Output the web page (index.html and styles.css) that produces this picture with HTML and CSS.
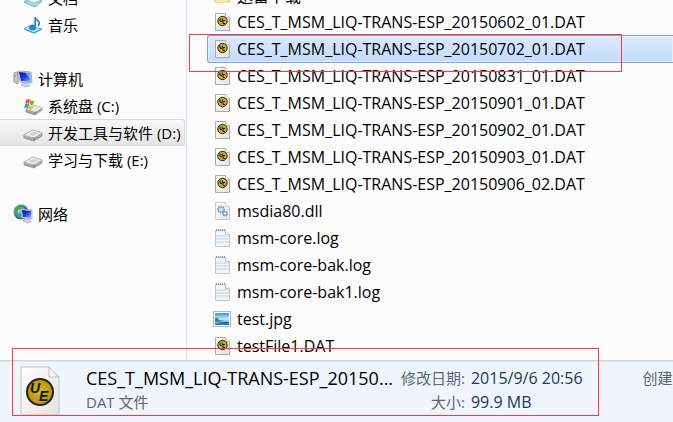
FILE: index.html
```
<!DOCTYPE html>
<html lang="zh-CN">
<head>
  <meta charset="UTF-8">
  <title>资源管理器</title>
  <link rel="stylesheet" href="styles.css">
</head>
<body>

  <!-- Shared icons -->
  <svg class="sprite" aria-hidden="true">
    <defs>
      <linearGradient id="paper" x1="0" y1="0" x2="1" y2="1">
        <stop offset="0" stop-color="#fff"/>
        <stop offset="1" stop-color="#e3e3e3"/>
      </linearGradient>
      <linearGradient id="screen" x1="0" y1="0" x2="1" y2="1">
        <stop offset="0" stop-color="#0713a8"/>
        <stop offset="0.5" stop-color="#1c3de0"/>
        <stop offset="1" stop-color="#8fc4ff"/>
      </linearGradient>
      <linearGradient id="sky" x1="0" y1="0" x2="0" y2="1">
        <stop offset="0" stop-color="#3c93e0"/>
        <stop offset="0.5" stop-color="#c5ecfb"/>
        <stop offset="1" stop-color="#2a84b8"/>
      </linearGradient>
      <radialGradient id="gold">
        <stop offset="0" stop-color="#d9b92c"/>
        <stop offset="1" stop-color="#b8920f"/>
      </radialGradient>
      <radialGradient id="earth" cx="0.35" cy="0.35">
        <stop offset="0" stop-color="#b6ecff"/>
        <stop offset="1" stop-color="#1768b8"/>
      </radialGradient>
    </defs>
    <symbol id="icon-dat" viewBox="0 0 40 50">
      <path d="M1 1h28l10 10v38H1z" fill="url(#paper)" stroke="#c4c4c4"/>
      <path d="M29 1v10h10z" fill="#f8f8f8" stroke="#b9b9b9"/>
      <circle cx="20" cy="26" r="13" fill="url(#gold)" stroke="#27231b" stroke-width="2"/>
      <text x="10" y="27" class="badge-letter">U</text>
      <text x="19" y="35" class="badge-letter">E</text>
    </symbol>
    <symbol id="icon-dat-small" viewBox="0 0 20 20">
      <path d="M3.5 1.5h10l4 4v13h-14z" fill="url(#paper)" stroke="#aaa"/>
      <path d="M13.5 1.5v4h4" fill="#fff" stroke="#bbb"/>
      <circle cx="10.5" cy="9" r="4.7" fill="#d2ac1c" stroke="#2c281d" stroke-width="1"/>
      <path d="M8 6.500v2.500q1 1.500 2.300 0V6.500M13 8.500h-2v3h2" fill="none" stroke="#17150f" stroke-width="1"/>
    </symbol>
    <symbol id="icon-dll" viewBox="0 0 20 20">
      <path d="M3.5 1.5h10l4 4v13h-14z" fill="url(#paper)" stroke="#ccc"/>
      <path d="M13.5 1.5v4h4" fill="#fff" stroke="#ccc"/>
      <circle cx="9" cy="8.5" r="3" fill="#e4f1fa" stroke="#86acc9" stroke-width="2" stroke-dasharray="1.5 0.7"/>
      <circle cx="9" cy="8.5" r="2.5" fill="#d6e9f6" stroke="#7ba5c4"/>
      <circle cx="13" cy="12.5" r="2" fill="#e4f1fa" stroke="#7ba5c4" stroke-width="1.5"/>
    </symbol>
    <symbol id="icon-log" viewBox="0 0 20 20">
      <path d="M3.5 2.5h10l4 4v12h-14z" fill="#f1f4f6" stroke="#c6c9cc"/>
      <path d="M4 8h13M4 11h13M4 14h13" stroke="#cfdfe9" stroke-width="1.5"/>
      <path d="M13.5 2.5v4h4" fill="#fff" stroke="#c2c2c2"/>
      <path d="M4 2h9" stroke="#999" stroke-width="2" stroke-dasharray="1 1"/>
    </symbol>
    <symbol id="icon-jpg" viewBox="0 0 20 20">
      <path d="M1.5 2.500h17v15h-17z" fill="#fff" stroke="#b8b8b8"/>
      <path d="M3 4h14v12H3z" fill="url(#sky)"/>
      <path d="M3 9q3-1 4 2l5 1-9 1z" fill="#38836b"/>
      <path d="M3 16q5-4 14-3v3z" fill="#2277b3"/>
    </symbol>
    <symbol id="icon-folder" viewBox="0 0 20 20">
      <path d="M3 3h6l2 2h6v12H3z" fill="#f3d778" stroke="#d9b14c"/>
      <path d="M5 8l11-2v11H3z" fill="#fbe9a6"/>
    </symbol>
    <symbol id="icon-docs" viewBox="0 0 20 20">
      <path d="M1 14l6-4 12 3-7 6z" fill="#a5d8f5" stroke="#5faedc"/>
      <path d="M5 3l9-1 3 11-7 2-4-2z" fill="#f3f8fc" stroke="#a7bccb"/>
      <path d="M8 7l5-1M8 10l6-1" stroke="#93b3ca"/>
    </symbol>
    <symbol id="icon-music" viewBox="0 0 20 20">
      <path d="M1 14l5-3 13 3-8 4z" fill="#b3e0f8" stroke="#58a8d8"/>
      <path d="M3 15l8 3 8-4" fill="none" stroke="#3f97cc"/>
      <ellipse cx="9.5" cy="12.5" rx="3.5" ry="3" fill="#2a86cb"/>
      <path d="M12.2 12V2q0 2 3 4 2 2 0 5" fill="none" stroke="#2a7bc0" stroke-width="1.600"/>
    </symbol>
    <symbol id="icon-computer" viewBox="0 0 20 20">
      <path d="M1 4l4-1v12l-4-2z" fill="#c5c9ca" stroke="#929a9b"/>
      <path d="M2 6v2" stroke="#4fb33c"/>
      <path d="M5 2l13 1 1 11-12-1z" fill="#d9dcde" stroke="#a7acb0"/>
      <path d="M6 3l11 1 1 9-10-1z" fill="url(#screen)"/>
      <path d="M12 3.5l5 .5 1 7z" fill="#bcdcff" opacity="0.6"/>
      <path d="M10 14h5l2 3-5 1-4-2z" fill="#d2d5d6" stroke="#a9adae" stroke-width="0.7"/>
    </symbol>
    <symbol id="icon-drive" viewBox="0 0 20 20">
      <path d="M1 12l9-5 9 3v3l-8 5-10-3z" fill="#a9a9a9" stroke="#8b8b8b" stroke-width="0.7"/>
      <path d="M1 12l9-5 9 3-8 5z" fill="#ededed" stroke="#b5b5b5" stroke-width="0.7"/>
      <path d="M6 11l5-2 4 1-5 3z" fill="#d0d0d0"/>
      <path d="M11 14.5v2.500" stroke="#43b334" stroke-width="1.500"/>
    </symbol>
    <symbol id="icon-system" viewBox="0 0 20 20">
      <path d="M3 13l8-4 8 3v2l-7 5-9-3z" fill="#a4a4a4" stroke="#858585" stroke-width="0.7"/>
      <path d="M3 13l8-4 8 3-7 4z" fill="#e6e6e6"/>
      <path d="M12 16v2" stroke="#43b334" stroke-width="1.5"/>
      <path d="M3 4q3-2 4 0l-1 4q-2-2-4 0z" fill="#e8632b"/>
      <path d="M7.5 4q2 2 4 0l-1 4q-2 2-4 0z" fill="#78b83b"/>
      <path d="M2 8.5q2-2 4 0l-1 4q-2-2-4 0z" fill="#3d94d8"/>
      <path d="M6.5 9q2 2 4 0l-1 4q-2 2-4 0z" fill="#f6c52d"/>
    </symbol>
    <symbol id="icon-network" viewBox="0 0 20 20">
      <circle cx="8" cy="8" r="7.5" fill="url(#earth)"/>
      <path d="M2 4q4-4 9-3l-3 4-3 1-1 4-3-2zM4 10l4 1 1 4-4-2z" fill="#51a73f"/>
      <path d="M8 5l11 1v9l-10-1z" fill="#d8dcdf" stroke="#9ba4ac" stroke-width="0.7"/>
      <path d="M9 6l9 1v7l-8-1z" fill="url(#screen)"/>
      <path d="M12 15h4l2 3-4 1-4-2z" fill="#cfd3d5" stroke="#a5a9ab" stroke-width="0.7"/>
    </symbol>
  </svg>

  <div class="panes">
    <nav class="sidebar">
      <div class="group">
        <a href="#" class="nav-item nested"><svg class="icon"><use href="#icon-docs"/></svg>文档</a>
        <a href="#" class="nav-item nested"><svg class="icon"><use href="#icon-music"/></svg>音乐</a>
      </div>
      <div class="group">
        <a href="#" class="nav-item"><svg class="icon"><use href="#icon-computer"/></svg>计算机</a>
        <a href="#" class="nav-item nested"><svg class="icon"><use href="#icon-system"/></svg>系统盘 (C:)</a>
        <a href="#" class="nav-item nested active"><svg class="icon"><use href="#icon-drive"/></svg>开发工具与软件 (D:)</a>
        <a href="#" class="nav-item nested"><svg class="icon"><use href="#icon-drive"/></svg>学习与下载 (E:)</a>
      </div>
      <div class="group">
        <a href="#" class="nav-item"><svg class="icon"><use href="#icon-network"/></svg>网络</a>
      </div>
    </nav>

    <main class="files">
      <button class="file"><svg class="icon"><use href="#icon-folder"/></svg>迅雷下载</button>
      <button class="file"><svg class="icon"><use href="#icon-dat-small"/></svg>CES_T_MSM_LIQ-TRANS-ESP_20150602_01.DAT</button>
      <button class="file selected"><svg class="icon"><use href="#icon-dat-small"/></svg>CES_T_MSM_LIQ-TRANS-ESP_20150702_01.DAT</button>
      <button class="file"><svg class="icon"><use href="#icon-dat-small"/></svg>CES_T_MSM_LIQ-TRANS-ESP_20150831_01.DAT</button>
      <button class="file"><svg class="icon"><use href="#icon-dat-small"/></svg>CES_T_MSM_LIQ-TRANS-ESP_20150901_01.DAT</button>
      <button class="file"><svg class="icon"><use href="#icon-dat-small"/></svg>CES_T_MSM_LIQ-TRANS-ESP_20150902_01.DAT</button>
      <button class="file"><svg class="icon"><use href="#icon-dat-small"/></svg>CES_T_MSM_LIQ-TRANS-ESP_20150903_01.DAT</button>
      <button class="file"><svg class="icon"><use href="#icon-dat-small"/></svg>CES_T_MSM_LIQ-TRANS-ESP_20150906_02.DAT</button>
      <button class="file"><svg class="icon"><use href="#icon-dll"/></svg>msdia80.dll</button>
      <button class="file"><svg class="icon"><use href="#icon-log"/></svg>msm-core.log</button>
      <button class="file"><svg class="icon"><use href="#icon-log"/></svg>msm-core-bak.log</button>
      <button class="file"><svg class="icon"><use href="#icon-log"/></svg>msm-core-bak1.log</button>
      <button class="file"><svg class="icon"><use href="#icon-jpg"/></svg>test.jpg</button>
      <button class="file"><svg class="icon"><use href="#icon-dat-small"/></svg>testFile1.DAT</button>
    </main>
  </div>

  <footer class="details">
    <svg class="details-icon"><use href="#icon-dat"/></svg>
    <div class="details-name">
      <h1>CES_T_MSM_LIQ-TRANS-ESP_20150...</h1>
      <p>DAT 文件</p>
    </div>
    <dl class="details-info">
      <dt>修改日期:</dt>
      <dd>2015/9/6 20:56</dd>
      <dt>大小:</dt>
      <dd>99.9 MB</dd>
    </dl>
    <div class="details-created">创建</div>
  </footer>

  <!-- Red marks over the window -->
  <div class="mark mark-file"></div>
  <div class="mark mark-details"></div>

</body>
</html>
```
FILE: styles.css
```
* {
  box-sizing: border-box;
  margin: 0;
  padding: 0;
}

body {
  position: relative;
  display: flex;
  flex-direction: column;
  height: 100vh;
  overflow: hidden;
  background: #fcfcfc;
  color: #000;
  font-family: "Open Sans", "Noto Sans CJK SC", sans-serif;
  font-size: 15px;
}

/* Kept rendered so the gradients still work */
.sprite {
  position: absolute;
  width: 0;
  height: 0;
}

.icon {
  width: 20px;
  height: 20px;
  flex-shrink: 0;
}

.badge-letter {
  font: italic bold 14px "Liberation Sans", sans-serif;
  fill: #17150f;
}

/* Panes */
.panes {
  display: flex;
  flex: 1;
  min-height: 0;
  overflow: hidden;
}

/* Sidebar */
.sidebar {
  display: flex;
  flex-direction: column;
  gap: 27px;
  width: 187px;
  flex-shrink: 0;
  margin-top: -16px;
  padding-right: 1px;
  border-right: 1px solid #d6e5f5;
}

.nav-item {
  display: flex;
  align-items: center;
  gap: 5px;
  height: 27px;
  padding-left: 13px;
  border: 1px solid transparent;
  border-left: none;
  border-radius: 0 3px 3px 0;
  color: #000;
  font-size: 15px;
  text-decoration: none;
  white-space: nowrap;
}

.nav-item.nested {
  padding-left: 23px;
}

.nav-item.active {
  border-color: #d9d9d9;
  background: linear-gradient(#f8f8f8, #e5e5e5);
}

/* File list, scrolled to the end */
.files {
  display: flex;
  flex: 1;
  flex-direction: column;
  justify-content: flex-end;
  min-width: 0;
  padding: 0 0 1px 20px;
}

.file {
  display: flex;
  align-items: center;
  gap: 5px;
  height: 27px;
  flex-shrink: 0;
  padding-left: 4px;
  border: 1px solid transparent;
  border-right: none;
  border-radius: 3px 0 0 3px;
  background: none;
  color: #000;
  font-family: inherit;
  font-size: 16px;
  text-align: left;
  white-space: nowrap;
}

.file.selected {
  height: 28px;
  margin-bottom: -1px;
  border-color: #7da2ce;
  background: linear-gradient(#dceafc, #c1dbfc);
  box-shadow: inset 0 0 0 1px #e6f0fd;
}

/* Details bar */
.details {
  display: flex;
  flex-shrink: 0;
  height: 62px;
  padding: 5px 0 0 20px;
  border-top: 1px solid #c5d6e8;
  background: #f0f4fb;
  box-shadow: inset 0 1px 0 #dde8f3;
  color: #5a6779;
  line-height: 24px;
  white-space: nowrap;
  overflow: hidden;
}

.details-icon {
  width: 40px;
  height: 50px;
  flex-shrink: 0;
}

.details-name {
  width: 308px;
  flex-shrink: 0;
  margin-left: 26px;
}

.details-name h1 {
  color: #000;
  font-size: 18px;
  font-weight: normal;
}

.details-info {
  display: grid;
  grid-template-columns: auto auto;
  align-content: start;
  column-gap: 6px;
  flex-shrink: 0;
  margin-left: 7px;
}

.details-info dt {
  text-align: right;
}

.details-info dd {
  color: #1e395b;
  font-size: 16px;
}

.details-created {
  flex-shrink: 0;
  margin-left: 60px;
}

/* Marks */
.mark {
  position: absolute;
  border: 1px solid #f53b3b;
  pointer-events: none;
}

.mark-file {
  top: 34px;
  left: 189px;
  width: 433px;
  height: 38px;
}

.mark-details {
  top: 348px;
  left: 12px;
  width: 587px;
  height: 68px;
}
```
